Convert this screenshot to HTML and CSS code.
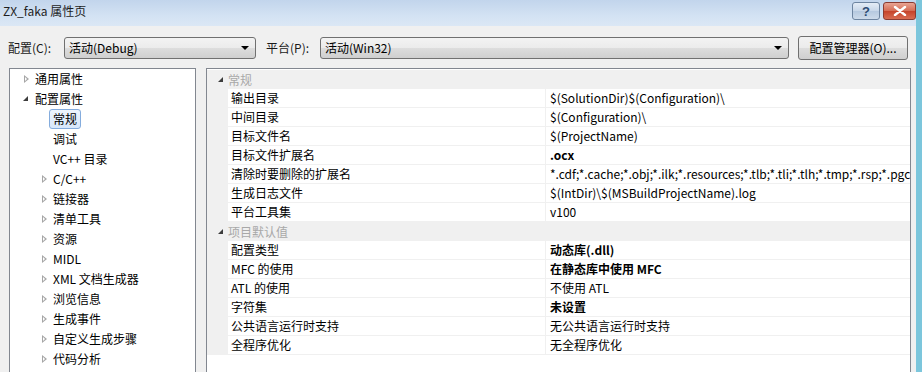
FILE: index.html
```html
<!DOCTYPE html>
<html lang="zh-CN">
<head>
  <meta charset="UTF-8">
  <title>ZX_faka 属性页</title>
  <link rel="stylesheet" href="styles.css">
</head>
<body>
  <div class="window">
    <div class="titlebar">
      <span class="title">ZX_faka 属性页</span>
      <div class="caption-btns">
        <span class="cap help">?</span>
        <span class="cap close">
          <svg width="14" height="10" viewBox="0 0 14 10"><path d="M2 1 L12 9 M12 1 L2 9" stroke="#fff" stroke-width="2.4" stroke-linecap="round"/></svg>
        </span>
      </div>
    </div>

    <div class="client">
      <div class="config-row">
        <span class="lbl">配置(C):</span>
        <div class="combo combo-config">活动(Debug)<span class="arrow"></span></div>
        <span class="lbl lbl-plat">平台(P):</span>
        <div class="combo combo-plat">活动(Win32)<span class="arrow"></span></div>
        <button class="mgr-btn">配置管理器(O)...</button>
      </div>

      <div class="main">
        <ul class="tree">
          <li class="node"><span class="exp closed"></span>通用属性</li>
          <li class="node"><span class="exp open"></span>配置属性</li>
          <li class="node child"><span class="exp none"></span><span class="sel">常规</span></li>
          <li class="node child"><span class="exp none"></span>调试</li>
          <li class="node child"><span class="exp none"></span>VC++ 目录</li>
          <li class="node child"><span class="exp closed"></span>C/C++</li>
          <li class="node child"><span class="exp closed"></span>链接器</li>
          <li class="node child"><span class="exp closed"></span>清单工具</li>
          <li class="node child"><span class="exp closed"></span>资源</li>
          <li class="node child"><span class="exp closed"></span>MIDL</li>
          <li class="node child"><span class="exp closed"></span>XML 文档生成器</li>
          <li class="node child"><span class="exp closed"></span>浏览信息</li>
          <li class="node child"><span class="exp closed"></span>生成事件</li>
          <li class="node child"><span class="exp closed"></span>自定义生成步骤</li>
          <li class="node child"><span class="exp closed"></span>代码分析</li>
        </ul>

        <div class="grid">
          <div class="cat"><span class="exp open"></span>常规</div>
          <div class="prop"><span class="name">输出目录</span><span class="val">$(SolutionDir)$(Configuration)\</span></div>
          <div class="prop"><span class="name">中间目录</span><span class="val">$(Configuration)\</span></div>
          <div class="prop"><span class="name">目标文件名</span><span class="val">$(ProjectName)</span></div>
          <div class="prop"><span class="name">目标文件扩展名</span><span class="val bold">.ocx</span></div>
          <div class="prop"><span class="name">清除时要删除的扩展名</span><span class="val">*.cdf;*.cache;*.obj;*.ilk;*.resources;*.tlb;*.tli;*.tlh;*.tmp;*.rsp;*.pgc</span></div>
          <div class="prop"><span class="name">生成日志文件</span><span class="val">$(IntDir)\$(MSBuildProjectName).log</span></div>
          <div class="prop"><span class="name">平台工具集</span><span class="val">v100</span></div>
          <div class="cat"><span class="exp open"></span>项目默认值</div>
          <div class="prop"><span class="name">配置类型</span><span class="val bold">动态库(.dll)</span></div>
          <div class="prop"><span class="name">MFC 的使用</span><span class="val bold">在静态库中使用 MFC</span></div>
          <div class="prop"><span class="name">ATL 的使用</span><span class="val">不使用 ATL</span></div>
          <div class="prop"><span class="name">字符集</span><span class="val bold">未设置</span></div>
          <div class="prop"><span class="name">公共语言运行时支持</span><span class="val">无公共语言运行时支持</span></div>
          <div class="prop"><span class="name">全程序优化</span><span class="val">无全程序优化</span></div>
        </div>
      </div>
    </div>
  </div>
</body>
</html>
```

FILE: styles.css
```css
* { margin: 0; padding: 0; box-sizing: border-box; }
html, body {
  width: 922px;
  height: 372px;
  overflow: hidden;
  background: #f0f0f0;
  font-family: "Noto Sans CJK SC", "Noto Sans", sans-serif;
  font-size: 12px;
  color: #000;
}
.window {
  height: 372px;
  border-right: 6px solid #7cc6dc;
  display: flex;
  flex-direction: column;
}
.titlebar {
  height: 26px;
  flex: none;
  display: flex;
  align-items: flex-start;
  justify-content: space-between;
  background: linear-gradient(to bottom, #c2d5ec, #d3e2f3 60%, #dbe7f5);
}
.title {
  padding: 2px 0 0 3px;
  line-height: 17px;
  font-size: 12px;
  color: #1e1e1e;
}
.caption-btns {
  display: flex;
  gap: 3px;
  padding-top: 2px;
}
.cap {
  height: 18px;
  display: flex;
  align-items: center;
  justify-content: center;
  border: 1px solid #6d84a0;
  border-radius: 3px;
}
.help {
  width: 28px;
  background: linear-gradient(to bottom, #e4ecf6, #c7d6e8 50%, #b5c8df 51%, #cddbea);
  color: #2d4b72;
  font-weight: bold;
  font-size: 13px;
  font-family: "Liberation Sans", sans-serif;
}
.close {
  width: 33px;
  border-color: #8a3b31;
  background: linear-gradient(to bottom, #e8a493, #d46a52 50%, #c5432a 51%, #d86c52);
}
.client {
  flex: 1;
  display: flex;
  flex-direction: column;
  padding: 9px 0 0 8px;
}
.config-row {
  display: flex;
  align-items: center;
  height: 25px;
}
.lbl {
  width: 56px;
  color: #1a1a1a;
}
.lbl-plat {
  margin-left: 10px;
  width: 54px;
}
.combo {
  position: relative;
  height: 22px;
  line-height: 20px;
  padding-left: 4px;
  border: 1px solid #707070;
  border-radius: 3px;
  background: linear-gradient(to bottom, #f3f3f3, #ebebeb 50%, #dddddd 51%, #cfcfcf);
}
.combo-config { width: 192px; }
.combo-plat { width: 469px; }
.arrow {
  position: absolute;
  right: 6px;
  top: 8px;
  border-left: 4px solid transparent;
  border-right: 4px solid transparent;
  border-top: 4px solid #000;
}
.mgr-btn {
  margin-left: 9px;
  width: 110px;
  height: 24px;
  font-family: inherit;
  font-size: 12px;
  color: #000;
  border: 1px solid #707070;
  border-radius: 3px;
  background: linear-gradient(to bottom, #f2f2f2, #ebebeb 50%, #dddddd 51%, #cfcfcf);
}
.main {
  flex: 1;
  display: flex;
  margin-top: 8px;
  padding-left: 1px;
  gap: 10px;
}
.tree {
  list-style: none;
  width: 187px;
  height: 320px;
  background: #fff;
  border: 1px solid #828790;
  border-bottom: none;
}
.node {
  height: 20px;
  line-height: 20px;
  display: flex;
  align-items: center;
  padding-left: 12px;
  white-space: nowrap;
}
.node.child { padding-left: 30px; }
.exp {
  width: 13px;
  height: 10px;
  flex: none;
  position: relative;
}
.exp.closed::before {
  content: "";
  position: absolute;
  left: 2px;
  top: 1px;
  border-top: 4px solid transparent;
  border-bottom: 4px solid transparent;
  border-left: 5px solid #a6a6a6;
}
.exp.closed::after {
  content: "";
  position: absolute;
  left: 3px;
  top: 3px;
  border-top: 2px solid transparent;
  border-bottom: 2px solid transparent;
  border-left: 2.5px solid #fff;
}
.exp.open::before {
  content: "";
  position: absolute;
  left: 1px;
  top: 2px;
  border-left: 5px solid transparent;
  border-bottom: 5px solid #3c3c3c;
}
.sel {
  margin-left: -4px;
  padding: 0 3px;
  height: 20px;
  line-height: 18px;
  border: 1px solid #84acdd;
  border-radius: 3px;
  background: linear-gradient(to bottom, #eef5fd, #d7e7fb);
}
.grid {
  width: 705px;
  height: 320px;
  background: #fff;
  border: 1px solid #828790;
  border-bottom: none;
  padding-top: 1px;
}
.cat {
  height: 19px;
  line-height: 19px;
  display: flex;
  align-items: center;
  padding-left: 10px;
  background: #f0f0f0;
  color: #a8a8a8;
}
.cat .exp { width: 11px; }
.prop {
  height: 19px;
  line-height: 18px;
  display: flex;
  border-left: 21px solid #f0f0f0;
  white-space: nowrap;
}
.name {
  width: 318px;
  flex: none;
  padding-left: 3px;
  border-bottom: 1px solid #f0f0f0;
  border-right: 1px solid #f0f0f0;
}
.val {
  flex: 1;
  overflow: hidden;
  padding-left: 4px;
  border-bottom: 1px solid #f0f0f0;
}
.bold { font-weight: bold; }
```
